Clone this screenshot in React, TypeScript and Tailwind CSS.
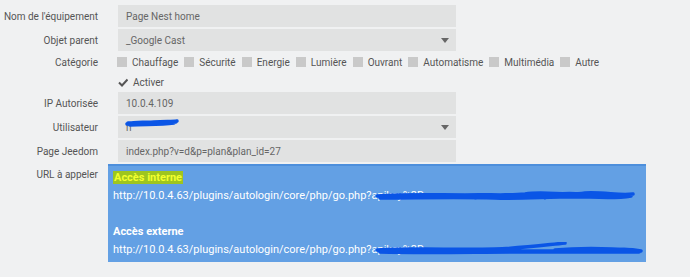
import React from 'react';

const categories = ['Chauffage', 'Sécurité', 'Energie', 'Lumière', 'Ouvrant', 'Automatisme', 'Multimédia', 'Autre'];

const Label: React.FC<{ children: React.ReactNode }> = ({ children }) => (
  <div className="w-[98px] shrink-0 text-right whitespace-nowrap text-[#555]">{children}</div>
);

const Field: React.FC<{ label: string; children?: React.ReactNode; select?: boolean }> = ({ label, children, select }) => (
  <div className="flex items-center h-[22px]">
    <Label>{label}</Label>
    <div className="ml-[20px] w-[338px] h-full bg-[#e1e2e2] flex items-center pl-[8px] pr-[7px] text-[#666]">
      <div className="flex-1 whitespace-nowrap">{children}</div>
      {select && (
        <svg width="8" height="5" viewBox="0 0 8 5" className="shrink-0">
          <path d="M0 0 L8 0 L4 5 Z" fill="#666" />
        </svg>
      )}
    </div>
  </div>
);

// blue marker scribbles hiding private values
const Scribble: React.FC<{ w: number; className?: string; d: string }> = ({ w, className, d }) => (
  <svg width={w} height="16" viewBox={`0 0 ${w} 16`} className={className}>
    <path d={d} stroke="#0a55e6" strokeWidth="3.5" fill="none" strokeLinecap="round" strokeLinejoin="round" />
  </svg>
);

export default function App() {
  return (
    <div className="w-[690px] h-[277px] bg-[#f0f1f2] pt-[5px] text-[10px] overflow-hidden" style={{ fontFamily: 'Roboto, "Liberation Sans", sans-serif' }}>
      <div className="flex flex-col gap-[2px]">
        <Field label="Nom de l'équipement">Page Nest home</Field>
        <Field label="Objet parent" select>_Google Cast</Field>
      </div>

      <div className="flex items-center h-[20px] mt-[1px]">
        <Label>Catégorie</Label>
        <div className="ml-[19px] flex items-center gap-[6px] text-[#555]">
          {categories.map((c) => (
            <div key={c} className="flex items-center gap-[5px]">
              <span className="w-[10px] h-[10px] bg-[#c9c9c9] inline-block" />
              <span>{c}</span>
            </div>
          ))}
        </div>
      </div>

      <div className="flex items-center h-[20px]">
        <div className="w-[118px] shrink-0" />
        <div className="flex items-center gap-[5px] text-[#555]">
          <svg width="10" height="9" viewBox="0 0 10 9">
            <path d="M1 4.5 L4 7.5 L9.5 1.5" stroke="#555" strokeWidth="2" fill="none" />
          </svg>
          <span>Activer</span>
        </div>
      </div>

      <div className="flex flex-col gap-[2px]">
        <Field label="IP Autorisée">10.0.4.109</Field>
        <Field label="Utilisateur" select>
          <span className="relative inline-block">
            n
            <Scribble
              w={56}
              className="absolute left-[-2px] top-[-5px]"
              d="M3 9 C12 6 22 8 30 7 C40 6 48 7 53 6 M6 10 C20 9 35 10 50 8 M4 8 C20 8 40 8 52 7"
            />
          </span>
        </Field>
        <Field label="Page Jeedom">index.php?v=d&amp;p=plan&amp;plan_id=27</Field>
      </div>

      <div className="flex mt-[2px]">
        <div className="w-[98px] shrink-0 text-right text-[#555] pt-[3px]">URL à appeler</div>
        <div className="ml-[10px] w-[538px] h-[98px] bg-[#63a0e4] border-t-[2px] border-[#4d8fdc] px-[5px] pt-[3px] text-[11px] text-white leading-[18px]">
          <div>
            <span className="font-bold text-[#f2ff2e] bg-[#9ec51f] px-[1px]">Accès interne</span>
          </div>
          <div className="relative whitespace-nowrap">
            http://10.0.4.63/plugins/autologin/core/php/go.php?apikey%3D
            <Scribble
              w={262}
              className="absolute left-[262px] top-[1px]"
              d="M2 8 C30 6 60 7 90 7 C110 6 130 8 150 6 C170 3 190 8 210 5 C230 4 245 8 258 6 M5 10 C40 10 80 9 120 10 C150 11 180 8 215 9 C235 10 250 9 256 8 M100 10 C130 5 160 6 200 8 M4 8 C60 8 120 8 250 8 M170 10 C185 4 200 4 220 9 M20 9 C80 9 150 9 245 9"
            />
          </div>
          <div className="h-[18px]" />
          <div className="font-bold">Accès externe</div>
          <div className="relative whitespace-nowrap">
            http://10.0.4.63/plugins/autologin/core/php/go.php?apikey%3D
            <Scribble
              w={270}
              className="absolute left-[262px] top-[1px]"
              d="M2 8 C40 6 80 8 120 7 C150 6 170 3 190 1 M60 10 C100 8 140 10 180 9 C200 5 220 8 240 8 C252 7 260 8 266 9 M5 10 C50 11 100 10 150 10 C200 10 230 10 264 10 M4 9 C80 9 160 9 262 9 M180 8 C200 6 230 6 260 8"
            />
          </div>
        </div>
      </div>
    </div>
  );
}
